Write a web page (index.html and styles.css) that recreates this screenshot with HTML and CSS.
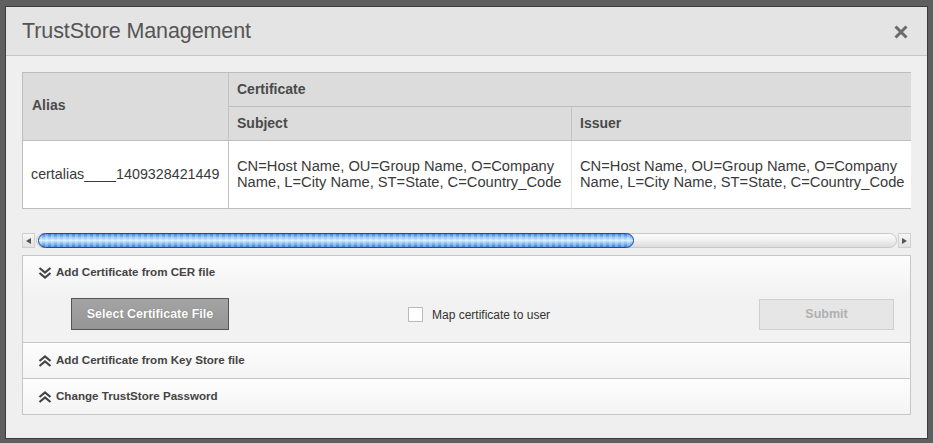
FILE: index.html
```html
<!DOCTYPE html>
<html>
<head>
<meta charset="utf-8">
<link rel="stylesheet" href="styles.css">
</head>
<body>
<div class="dialog">
  <div class="dlg-header">
    <h1 class="title">TrustStore Management</h1>
    <button class="close" aria-label="Close">
      <svg width="14" height="14" viewBox="0 0 14 14"><path d="M1.5 1.5 L12.5 12.5 M12.5 1.5 L1.5 12.5" stroke="#6a6a6a" stroke-width="3" stroke-linecap="butt" fill="none"/></svg>
    </button>
  </div>
  <div class="dlg-body">
    <div class="grid-scroll">
      <table class="grid">
        <colgroup><col class="c-alias"><col class="c-subject"><col class="c-issuer"></colgroup>
        <thead>
          <tr class="hrow">
            <th rowspan="2" class="th-alias">Alias</th>
            <th colspan="2">Certificate</th>
          </tr>
          <tr class="hrow">
            <th>Subject</th>
            <th>Issuer</th>
          </tr>
        </thead>
        <tbody>
          <tr class="brow">
            <td class="td-alias">certalias____1409328421449</td>
            <td>CN=Host Name, OU=Group Name, O=Company<br>Name, L=City Name, ST=State, C=Country_Code</td>
            <td>CN=Host Name, OU=Group Name, O=Company<br>Name, L=City Name, ST=State, C=Country_Code</td>
          </tr>
        </tbody>
      </table>
    </div>
    <div class="hscroll">
      <div class="arrow arrow-left"><span class="tri-left"></span></div>
      <div class="track"><div class="thumb" style="width:596px"></div></div>
      <div class="arrow arrow-right"><span class="tri-right"></span></div>
    </div>
    <div class="accordion">
      <section class="acc-item open">
        <div class="acc-head">
          <svg class="chev" width="14" height="12" viewBox="0 0 14 12"><path d="M1.5 1 L7 5.5 L12.5 1 M1.5 6 L7 10.5 L12.5 6" stroke="#444" stroke-width="2.2" fill="none"/></svg>
          <span>Add Certificate from CER file</span>
        </div>
        <div class="acc-content">
          <button class="btn-primary">Select Certificate File</button>
          <label class="check"><span class="box"></span><span class="check-label">Map certificate to user</span></label>
          <button class="btn-disabled">Submit</button>
        </div>
      </section>
      <section class="acc-item">
        <div class="acc-head">
          <svg class="chev" width="14" height="12" viewBox="0 0 14 12"><path d="M1.5 6 L7 1.5 L12.5 6 M1.5 11 L7 6.5 L12.5 11" stroke="#444" stroke-width="2.2" fill="none"/></svg>
          <span>Add Certificate from Key Store file</span>
        </div>
      </section>
      <section class="acc-item">
        <div class="acc-head">
          <svg class="chev" width="14" height="12" viewBox="0 0 14 12"><path d="M1.5 6 L7 1.5 L12.5 6 M1.5 11 L7 6.5 L12.5 11" stroke="#444" stroke-width="2.2" fill="none"/></svg>
          <span>Change TrustStore Password</span>
        </div>
      </section>
    </div>
  </div>
</div>
</body>
</html>
```

FILE: styles.css
```css
html, body { margin: 0; }
body {
  background: #5f5f5f;
  padding: 6px 0 0 5px;
  font-family: "Liberation Sans", Arial, sans-serif;
  color: #333;
}
.dialog {
  width: 921px;
  border: 1px solid #3c3c3c;
  background: #efefef;
}
.dlg-header {
  height: 48px;
  border-bottom: 1px solid #c6c6c6;
  background: #e4e4e4;
  display: flex;
  align-items: center;
  justify-content: space-between;
  padding: 0 19px 0 16px;
}
.title {
  margin: 0;
  font-weight: normal;
  font-size: 21.5px;
  color: #555;
  letter-spacing: -0.1px;
}
.close {
  width: 14px;
  height: 14px;
  padding: 0;
  border: 0;
  background: none;
  display: flex;
  margin-top: 1px;
}
.dlg-body {
  padding: 16px 16px 23px;
}
.grid-scroll {
  overflow: hidden;
  border-left: 1px solid #bdbdbd;
}
.grid {
  border-collapse: separate;
  border-spacing: 0;
  table-layout: fixed;
  width: 1100px;
  border-top: 1px solid #bdbdbd;
}
.c-alias { width: 206px; }
.c-subject { width: 343px; }
.c-issuer { width: 551px; }
.grid th, .grid td {
  border-right: 1px solid #c4c4c4;
  border-bottom: 1px solid #bdbdbd;
  padding: 0 8px;
  text-align: left;
}
.grid th {
  background: #dcdcdc;
  font-size: 14px;
  font-weight: bold;
  color: #4a4a4a;
  height: 31px;
  padding-bottom: 2px;
  vertical-align: middle;
}
.grid .th-alias { padding-left: 9px; padding-bottom: 4px; }
.grid td {
  background: #fff;
  font-size: 14.7px;
  line-height: 16px;
  height: 65px;
  padding-bottom: 2px;
  vertical-align: middle;
  color: #3a3a3a;
}
.grid .td-alias { font-size: 14.3px; }
.grid td:not(.td-alias) { border-right-color: #e6e6e6; }

.hscroll {
  margin-top: 24px;
  height: 15px;
  display: flex;
  align-items: stretch;
}
.arrow {
  width: 13px;
  background: linear-gradient(#f6f6f6, #e2e2e2);
  border: 1px solid #cfcfcf;
  box-sizing: border-box;
  display: flex;
  align-items: center;
  justify-content: center;
}
.tri-left {
  width: 0; height: 0;
  border-top: 3px solid transparent;
  border-bottom: 3px solid transparent;
  border-right: 5px solid #555;
}
.tri-right {
  width: 0; height: 0;
  border-top: 3px solid transparent;
  border-bottom: 3px solid transparent;
  border-left: 5px solid #555;
}
.track {
  flex: 1;
  margin: 0 1px 0 1px;
  border-radius: 8px;
  background: linear-gradient(#fcfcfc, #f0f0f0 50%, #dcdcdc);
  border: 1px solid #c8c8c8;
  box-sizing: border-box;
  display: flex;
}
.thumb {
  height: 15px;
  margin: -1px 0 0 1px;
  box-sizing: border-box;
  border: 1px solid #1d4c9e;
  border-radius: 8px;
  background:
    repeating-linear-gradient(90deg, rgba(255,255,255,0.25) 0 3px, rgba(255,255,255,0) 3px 6px),
    linear-gradient(#3f7fd8 0%, #8ec4f6 25%, #d2ecff 50%, #8cc2f4 70%, #3b7ed6 100%);
}

.accordion {
  margin-top: 7px;
  border: 1px solid #c6c6c6;
}
.acc-item + .acc-item { border-top: 1px solid #c6c6c6; }
.acc-item.open {
  background: linear-gradient(#fdfdfd 0, #f2f2f2 40px, #f2f2f2 100%);
}
.acc-item:not(.open) {
  background: linear-gradient(#fdfdfd, #f4f4f4);
}
.acc-head {
  height: 35px;
  display: flex;
  align-items: center;
  padding-left: 15px;
  font-size: 11.6px;
  font-weight: bold;
  color: #444;
}
.acc-head span { margin-bottom: 2px; }
.acc-item.open .acc-head { height: 32px; }
.chev { margin-right: 4px; margin-top: 1px; flex: none; }
.acc-content {
  display: flex;
  align-items: center;
  padding: 10px 16px 12px 48px;
}
.btn-primary {
  width: 158px;
  height: 32px;
  border: 1px solid #555;
  background: linear-gradient(#a4a4a4, #959595);
  color: #fff;
  font-family: inherit;
  font-weight: bold;
  font-size: 12.5px;
  text-shadow: 0 0 1px rgba(0,0,0,0.3);
  padding: 0;
}
.check {
  display: flex;
  align-items: center;
  margin-left: 179px;
  font-size: 12px;
  color: #333;
  margin-top: 1px;
}
.box {
  width: 15px;
  height: 15px;
  box-sizing: border-box;
  border: 1px solid #bbb;
  background: #fff;
}
.check-label { margin-left: 9px; }
.btn-disabled {
  margin-left: auto;
  width: 135px;
  height: 31px;
  border: 1px solid #cfcfcf;
  background: #e6e6e6;
  color: #b0b0b0;
  font-family: inherit;
  font-weight: bold;
  font-size: 12.5px;
  padding: 0;
}
```
